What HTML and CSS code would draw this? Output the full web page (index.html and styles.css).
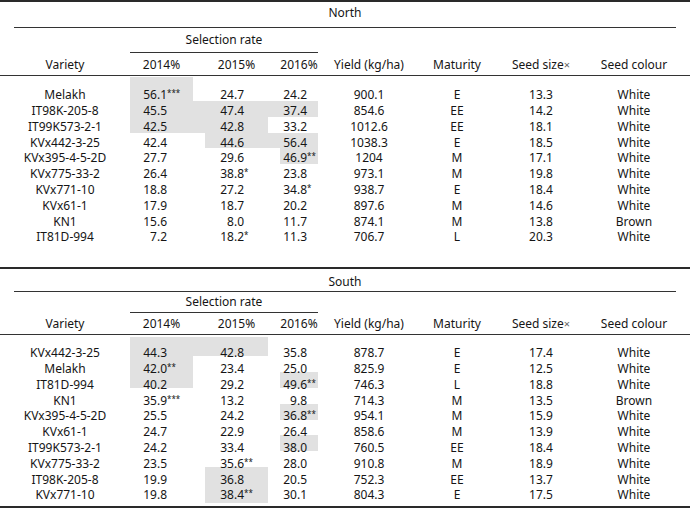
FILE: index.html
```html
<!DOCTYPE html>
<html lang="en">
<head>
<meta charset="utf-8">
<title>Selection rate by region</title>
<link rel="stylesheet" href="styles.css">
</head>
<body>
<section class="tbl north">
  <div class="title">North</div>
  <div class="cols group"><div class="span">Selection rate</div></div>
  <div class="cols head">
    <div>Variety</div><div>2014%</div><div>2015%</div><div>2016%</div>
    <div>Yield (kg/ha)</div><div>Maturity</div><div>Seed size<span class="x">×</span></div><div>Seed colour</div>
  </div>
  <div class="body">
    <div class="cols row first"><div>Melakh</div><div class="sh"><span class="v">56.1</span><span class="s">***</span></div><div><span class="v">24.7</span></div><div><span class="v">24.2</span></div><div>900.1</div><div>E</div><div>13.3</div><div>White</div></div>
    <div class="cols row"><div>IT98K-205-8</div><div class="sh j"><span class="v">45.5</span></div><div class="sh j"><span class="v">47.4</span></div><div class="sh"><span class="v">37.4</span></div><div>854.6</div><div>EE</div><div>14.2</div><div>White</div></div>
    <div class="cols row"><div>IT99K573-2-1</div><div class="sh j"><span class="v">42.5</span></div><div class="sh"><span class="v">42.8</span></div><div><span class="v">33.2</span></div><div>1012.6</div><div>EE</div><div>18.1</div><div>White</div></div>
    <div class="cols row"><div>KVx442-3-25</div><div><span class="v">42.4</span></div><div class="sh j"><span class="v">44.6</span></div><div class="sh"><span class="v">56.4</span></div><div>1038.3</div><div>E</div><div>18.5</div><div>White</div></div>
    <div class="cols row"><div>KVx395-4-5-2D</div><div><span class="v">27.7</span></div><div><span class="v">29.6</span></div><div class="sh"><span class="v">46.9</span><span class="s">**</span></div><div>1204</div><div>M</div><div>17.1</div><div>White</div></div>
    <div class="cols row"><div>KVx775-33-2</div><div><span class="v">26.4</span></div><div><span class="v">38.8</span><span class="s">*</span></div><div><span class="v">23.8</span></div><div>973.1</div><div>M</div><div>19.8</div><div>White</div></div>
    <div class="cols row"><div>KVx771-10</div><div><span class="v">18.8</span></div><div><span class="v">27.2</span></div><div><span class="v">34.8</span><span class="s">*</span></div><div>938.7</div><div>E</div><div>18.4</div><div>White</div></div>
    <div class="cols row"><div>KVx61-1</div><div><span class="v">17.9</span></div><div><span class="v">18.7</span></div><div><span class="v">20.2</span></div><div>897.6</div><div>M</div><div>14.6</div><div>White</div></div>
    <div class="cols row"><div>KN1</div><div><span class="v">15.6</span></div><div><span class="v">8.0</span></div><div><span class="v">11.7</span></div><div>874.1</div><div>M</div><div>13.8</div><div>Brown</div></div>
    <div class="cols row"><div>IT81D-994</div><div><span class="v">7.2</span></div><div><span class="v">18.2</span><span class="s">*</span></div><div><span class="v">11.3</span></div><div>706.7</div><div>L</div><div>20.3</div><div>White</div></div>
  </div>
</section>

<section class="tbl south">
  <div class="title">South</div>
  <div class="cols group"><div class="span">Selection rate</div></div>
  <div class="cols head">
    <div>Variety</div><div>2014%</div><div>2015%</div><div>2016%</div>
    <div>Yield (kg/ha)</div><div>Maturity</div><div>Seed size<span class="x">×</span></div><div>Seed colour</div>
  </div>
  <div class="body">
    <div class="cols row first"><div>KVx442-3-25</div><div class="sh j"><span class="v">44.3</span></div><div class="sh"><span class="v">42.8</span></div><div><span class="v">35.8</span></div><div>878.7</div><div>E</div><div>17.4</div><div>White</div></div>
    <div class="cols row"><div>Melakh</div><div class="sh"><span class="v">42.0</span><span class="s">**</span></div><div><span class="v">23.4</span></div><div><span class="v">25.0</span></div><div>825.9</div><div>E</div><div>12.5</div><div>White</div></div>
    <div class="cols row"><div>IT81D-994</div><div class="sh"><span class="v">40.2</span></div><div><span class="v">29.2</span></div><div class="sh"><span class="v">49.6</span><span class="s">**</span></div><div>746.3</div><div>L</div><div>18.8</div><div>White</div></div>
    <div class="cols row"><div>KN1</div><div><span class="v">35.9</span><span class="s">***</span></div><div><span class="v">13.2</span></div><div><span class="v">9.8</span></div><div>714.3</div><div>M</div><div>13.5</div><div>Brown</div></div>
    <div class="cols row"><div>KVx395-4-5-2D</div><div><span class="v">25.5</span></div><div><span class="v">24.2</span></div><div class="sh"><span class="v">36.8</span><span class="s">**</span></div><div>954.1</div><div>M</div><div>15.9</div><div>White</div></div>
    <div class="cols row"><div>KVx61-1</div><div><span class="v">24.7</span></div><div><span class="v">22.9</span></div><div><span class="v">26.4</span></div><div>858.6</div><div>M</div><div>13.9</div><div>White</div></div>
    <div class="cols row"><div>IT99K573-2-1</div><div><span class="v">24.2</span></div><div><span class="v">33.4</span></div><div class="sh"><span class="v">38.0</span></div><div>760.5</div><div>EE</div><div>18.4</div><div>White</div></div>
    <div class="cols row"><div>KVx775-33-2</div><div><span class="v">23.5</span></div><div><span class="v">35.6</span><span class="s">**</span></div><div><span class="v">28.0</span></div><div>910.8</div><div>M</div><div>18.9</div><div>White</div></div>
    <div class="cols row"><div>IT98K-205-8</div><div><span class="v">19.9</span></div><div class="sh"><span class="v">36.8</span></div><div><span class="v">20.5</span></div><div>752.3</div><div>EE</div><div>13.7</div><div>White</div></div>
    <div class="cols row last"><div>KVx771-10</div><div><span class="v">19.8</span></div><div class="sh"><span class="v">38.4</span><span class="s">**</span></div><div><span class="v">30.1</span></div><div>804.3</div><div>E</div><div>17.5</div><div>White</div></div>
  </div>
</section>
</body>
</html>
```

FILE: styles.css
```css
* { box-sizing: border-box; }

body {
  margin: 0;
  background: #fff;
  color: #151515;
  font-family: "Noto Sans", "Open Sans", sans-serif;
  font-size: 12px;
}

.tbl {
  border-top: 2px solid #2a2a2a;
}

.north {
  --t1: 3px; --t2: 6px;
  --g1: 4px; --g2: 4px;
  --h1: 4px; --h2: 2px;
  --bp: 1px;
  --rh: 15.8px; --p: 4px; --lh: 11.8px; --xt: 8.2px; --xb: 0px;
  margin-bottom: 23.8px;
}

.south {
  --t1: 5px; --t2: 1px;
  --g1: 2.5px; --g2: 1.5px;
  --h1: 3.5px; --h2: 1.5px;
  --bp: 2px;
  --rh: 15.8px; --p: 8.6px; --lh: 7.2px; --xt: 3.6px; --xb: 4.4px;
  border-bottom: 2px solid #2a2a2a;
}

.title {
  margin: 0 14px;
  padding: var(--t1) 0 var(--t2);
  line-height: 16px;
  text-align: center;
  border-bottom: 1px solid #333;
}

.cols {
  display: grid;
  grid-template-columns: 130px 75px 75px 38px 102px 74px 94px 92px;
}

.cols > div {
  text-align: center;
  white-space: nowrap;
}

.group {
  padding-top: var(--g1);
  line-height: 16px;
}

.group .span {
  grid-column: 2 / 5;
  padding-bottom: var(--g2);
  border-bottom: 1px solid #333;
}

.head {
  padding: var(--h1) 0 var(--h2);
  line-height: 16px;
  border-bottom: 1px solid #333;
}

.head > :nth-child(2),
.head > :nth-child(3),
.row > :nth-child(2),
.row > :nth-child(3) {
  margin-right: 12px;
}

.row > .j {
  margin-right: 0;
}

.body {
  padding-top: var(--bp);
  padding-bottom: 3px;
}

.north .body {
  padding-bottom: 0;
}

.row {
  height: var(--rh);
}

.row > div {
  padding-top: var(--p);
  line-height: var(--lh);
}

.row > :nth-child(2),
.row > :nth-child(3),
.row > :nth-child(4) {
  text-align: left;
}

.row.first {
  height: calc(var(--rh) + var(--xt));
}

.row.first > div {
  padding-top: calc(var(--p) + var(--xt));
}

.row.last {
  height: calc(var(--rh) + var(--xb));
}

.sh {
  background: #e1e1e1;
}

/* keep figures painted above the shading of the next row */
.v,
.s {
  position: relative;
  z-index: 1;
}

.v {
  display: inline-block;
  text-align: right;
}

.row > :nth-child(2) .v { width: 37px; }
.row > :nth-child(3) .v { width: 39px; }
.row > :nth-child(4) .v { width: 27px; }

.s {
  font-size: 8px;
  line-height: 0;
  vertical-align: 3px;
}

.x {
  color: #666;
  font-size: 11px;
}
```
